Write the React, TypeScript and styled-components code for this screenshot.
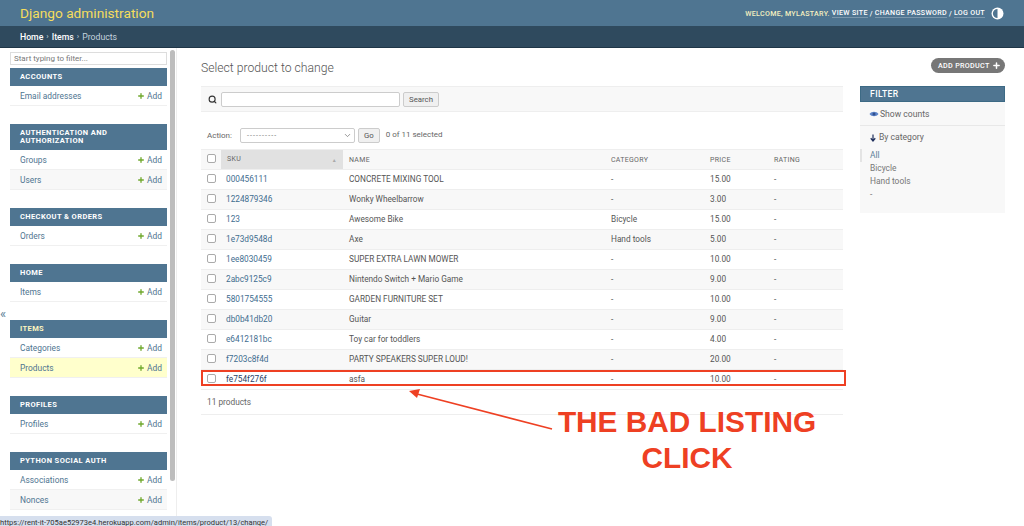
import React from "react"
import styled, { createGlobalStyle } from "styled-components"
import { Plus, Search as SearchIcon, ChevronDown } from "lucide-react"

const GlobalStyle = createGlobalStyle`
  html, body {
    margin: 0;
    padding: 0;
    width: 1024px;
    height: 526px;
    overflow: hidden;
    background: #fff;
    font-family: Roboto, "Liberation Sans", sans-serif;
    color: #444;
  }
  * { box-sizing: border-box; }
`

const Page = styled.div`
  position: relative;
  width: 1024px;
  height: 526px;
  overflow: hidden;
  display: flex;
  flex-direction: column;
`

const Header = styled.header`
  height: 26px;
  flex: none;
  background: #4f7591;
  display: flex;
  align-items: center;
  justify-content: space-between;
  padding: 0 20px 0 20px;
`

const Brand = styled.div`
  font-size: 13.7px;
  color: #f5dd5d;
  font-weight: 400;
`

const UserTools = styled.div`
  display: flex;
  align-items: center;
  font-size: 7.1px;
  letter-spacing: 0.3px;
  color: #f5f0c0;
  text-transform: uppercase;
  font-weight: 500;
`

const ToolLink = styled.span`
  color: #fff;
  border-bottom: 1px solid rgba(255, 255, 255, 0.25);
`

const Slash = styled.span`
  color: #fff;
  margin: 0 2px;
`

const ThemeIcon = styled.svg`
  width: 13px;
  height: 13px;
  margin-left: 6px;
`

const Crumbs = styled.nav`
  height: 22px;
  flex: none;
  background: #2f4a5e;
  border-bottom: 1px solid #1f3647;
  padding-left: 20px;
  display: flex;
  align-items: center;
  font-size: 8.7px;
  color: #c5d4de;
`

const CrumbLink = styled.span`
  color: #fff;
  font-weight: 500;
`

const CrumbSep = styled.span`
  margin: 0 3px;
  font-size: 8px;
`

const Main = styled.div`
  flex: 1;
  display: flex;
  min-height: 0;
`

const SideArea = styled.aside`
  width: 177px;
  flex: none;
  display: flex;
  border-right: 1px solid #eee;
  overflow: hidden;
`

const ToggleColumn = styled.div`
  width: 10px;
  flex: none;
  color: #5b7f98;
  font-size: 13px;
  padding-top: 258px;
`

const SideNav = styled.div`
  width: 157px;
  flex: none;
  padding-top: 4px;
`

const FilterInput = styled.div`
  height: 13px;
  border: 1px solid #ddd;
  background: #fff;
  font-size: 8px;
  line-height: 11px;
  color: #777;
  padding-left: 3px;
  margin-bottom: 3px;
`

const Module = styled.section`
  margin-bottom: 18px;
`

const Caption = styled.div<{ $current?: boolean }>`
  background: #4f7591;
  font-size: 7.5px;
  font-weight: 700;
  letter-spacing: 0.4px;
  line-height: 8px;
  padding: 5px 10px;
  text-transform: uppercase;
  color: ${(p) => (p.$current ? "#fdf6c0" : "#fff")};
`

const NavRow = styled.div<{ $tone?: "gray" | "current" }>`
  height: 20px;
  display: flex;
  align-items: center;
  justify-content: space-between;
  padding: 0 5px 0 10px;
  font-size: 8.4px;
  color: #4f7591;
  border-bottom: 1px solid #f0f0f0;
  background: ${(p) =>
    p.$tone === "current" ? "#ffffcc" : p.$tone === "gray" ? "#f8f8f8" : "#fff"};
`

const AddLink = styled.span`
  display: flex;
  align-items: center;
  gap: 2px;
`

const ScrollThumb = styled.div`
  width: 5px;
  height: 431px;
  margin: 2px 0 0 3px;
  border-radius: 3px;
  background: #bdbdbd;
  flex: none;
`

const Content = styled.main`
  flex: 1;
  display: flex;
  padding: 10px 19px 0 24px;
  gap: 17px;
`

const ListColumn = styled.div`
  width: 642px;
  flex: none;
`

const Title = styled.h1`
  margin: 2px 0 10px;
  font-size: 12.2px;
  font-weight: 300;
  line-height: 16px;
  color: #555;
`

const Toolbar = styled.div`
  height: 26px;
  background: #f8f8f8;
  border-top: 1px solid #eee;
  border-bottom: 1px solid #eee;
  padding-left: 7px;
  display: flex;
  align-items: center;
  margin-bottom: 12px;
`

const SearchBox = styled.div`
  width: 179px;
  height: 15px;
  margin-left: 4px;
  background: #fff;
  border: 1px solid #ccc;
  border-radius: 2px;
`

const GrayButton = styled.div`
  height: 15px;
  margin-left: 3px;
  padding: 0 5px;
  display: flex;
  align-items: center;
  font-size: 7.8px;
  color: #555;
  background: #f0f0f0;
  border: 1px solid #ccc;
  border-radius: 2px;
`

const Actions = styled.div`
  height: 23px;
  margin-bottom: 2px;
  display: flex;
  align-items: center;
  padding-left: 6px;
  font-size: 8px;
  color: #666;
`

const ActionSelect = styled.div`
  width: 115px;
  height: 15px;
  margin-left: 8px;
  padding: 0 2px 0 6px;
  display: flex;
  align-items: center;
  justify-content: space-between;
  background: #fff;
  border: 1px solid #ccc;
  border-radius: 2px;
  color: #777;
`

const Dashes = styled.span`
  font-size: 7px;
  letter-spacing: 1.1px;
`

const Counter = styled.span`
  margin-left: 6px;
  position: relative;
  top: -1px;
`

const Table = styled.table`
  width: 642px;
  border-collapse: collapse;
  table-layout: fixed;
  font-size: 8.25px;
`

const Th = styled.th<{ $sorted?: boolean }>`
  height: 20px;
  padding: 0 6px;
  text-align: left;
  font-size: 7px;
  font-weight: 400;
  letter-spacing: 0.3px;
  color: #666;
  text-transform: uppercase;
  background: ${(p) => (p.$sorted ? "#e1e1e1" : "#f8f8f8")};
  border-top: 1px solid #eee;
  border-bottom: 1px solid #eee;
`

const SortMark = styled.span`
  float: right;
  color: #aaa;
  font-size: 5px;
  line-height: 10px;
`

const Tr = styled.tr<{ $striped: boolean }>`
  background: ${(p) => (p.$striped ? "#f8f8f8" : "#fff")};
`

const Td = styled.td`
  height: 20px;
  padding: 0 6px 1px;
  border-bottom: 1px solid #eee;
  color: #555;
  white-space: nowrap;
`

const CheckCell = styled(Td)`
  padding: 0 0 2px 6px;
`

const CheckHead = styled(Th)`
  padding: 0 0 2px 6px;
`

const SkuCell = styled(Td)<{ $dark?: boolean }>`
  padding-left: 5px;
  color: ${(p) => (p.$dark ? "#2a3f66" : "#3f6d8f")};
`

const Check = styled.span`
  display: block;
  width: 9px;
  height: 9px;
  background: #fff;
  border: 1px solid #aaa;
  border-radius: 2px;
`

const Paginator = styled.div`
  height: 25px;
  padding-left: 6px;
  display: flex;
  align-items: center;
  font-size: 8.3px;
  color: #666;
  border-bottom: 1px solid #eee;
`

const FilterPanel = styled.div`
  width: 145px;
  flex: none;
  margin-top: 28px;
  align-self: flex-start;
  background: #f8f8f8;
  height: 127px;
`

const AddButton = styled.div`
  position: absolute;
  top: 58px;
  left: 931px;
  width: 74px;
  height: 15px;
  padding: 0 4px 0 7px;
  border-radius: 8px;
  background: #777;
  color: #fff;
  font-size: 7.2px;
  font-weight: 500;
  letter-spacing: 0.3px;
  display: flex;
  align-items: center;
  justify-content: space-between;
`

const FilterTitle = styled.div`
  height: 16px;
  background: #4f7591;
  border: 1px solid #3d6a85;
  color: #fff;
  font-size: 8.6px;
  font-weight: 500;
  letter-spacing: 0.4px;
  padding-left: 9px;
  line-height: 14px;
`

const ShowCounts = styled.div`
  height: 24px;
  padding-left: 9px;
  display: flex;
  align-items: center;
  gap: 1px;
  font-size: 8.6px;
  color: #666;
  border-bottom: 1px solid #e8e8e8;
`

const FilterHeading = styled.div`
  padding: 6px 0 5.5px 10px;
  display: flex;
  align-items: center;
  gap: 3px;
  font-size: 8.6px;
  line-height: 11px;
  color: #666;
`

const FilterItem = styled.div<{ $selected?: boolean }>`
  height: 13.3px;
  line-height: 13.3px;
  padding-left: 8px;
  font-size: 8.4px;
  color: ${(p) => (p.$selected ? "#5b7f98" : "#777")};
  border-left: 2px solid ${(p) => (p.$selected ? "#e4e4e4" : "transparent")};
`

const Highlight = styled.div`
  position: absolute;
  left: 201px;
  top: 370px;
  width: 645px;
  height: 16px;
  border: 2px solid #ee4023;
`

const ArrowArt = styled.svg`
  position: absolute;
  left: 405px;
  top: 385px;
  width: 155px;
  height: 50px;
`

const Callout = styled.div`
  position: absolute;
  left: 540px;
  top: 404px;
  width: 294px;
  text-align: center;
  color: #ee4023;
  font-family: "Liberation Sans", sans-serif;
  font-weight: 700;
  font-size: 29.8px;
  line-height: 36px;
`

const StatusBar = styled.div`
  position: absolute;
  left: 0;
  bottom: 0;
  width: 272px;
  height: 10px;
  background: #d6dfee;
  border-top-right-radius: 3px;
  font-size: 7.55px;
  line-height: 13px;
  color: #333;
  overflow: hidden;
  white-space: nowrap;
`

type Entry = { label: string; tone?: "gray" | "current" }
const modules: { name: string; rows: Entry[]; current?: boolean }[] = [
  { name: "Accounts", rows: [{ label: "Email addresses" }] },
  {
    name: "Authentication and Authorization",
    rows: [{ label: "Groups" }, { label: "Users", tone: "gray" }],
  },
  { name: "Checkout & Orders", rows: [{ label: "Orders" }] },
  { name: "Home", rows: [{ label: "Items" }] },
  {
    name: "Items",
    current: true,
    rows: [{ label: "Categories" }, { label: "Products", tone: "current" }],
  },
  { name: "Profiles", rows: [{ label: "Profiles" }] },
  {
    name: "Python Social Auth",
    rows: [{ label: "Associations" }, { label: "Nonces", tone: "gray" }],
  },
]

const products = [
  ["000456111", "CONCRETE MIXING TOOL", "-", "15.00"],
  ["1224879346", "Wonky Wheelbarrow", "-", "3.00"],
  ["123", "Awesome Bike", "Bicycle", "15.00"],
  ["1e73d9548d", "Axe", "Hand tools", "5.00"],
  ["1ee8030459", "SUPER EXTRA LAWN MOWER", "-", "10.00"],
  ["2abc9125c9", "Nintendo Switch + Mario Game", "-", "9.00"],
  ["5801754555", "GARDEN FURNITURE SET", "-", "10.00"],
  ["db0b41db20", "Guitar", "-", "9.00"],
  ["e6412181bc", "Toy car for toddlers", "-", "4.00"],
  ["f7203c8f4d", "PARTY SPEAKERS SUPER LOUD!", "-", "20.00"],
  ["fe754f276f", "asfa", "-", "10.00"],
]

const App = function () {
  return (
    <Page>
      <GlobalStyle />
      <Header>
        <Brand>Django administration</Brand>
        <UserTools>
          Welcome, mylastary.&nbsp;
          <ToolLink>View site</ToolLink>
          <Slash>/</Slash>
          <ToolLink>Change password</ToolLink>
          <Slash>/</Slash>
          <ToolLink>Log out</ToolLink>
          <ThemeIcon viewBox="0 0 24 24">
            <circle cx="12" cy="12" r="11" fill="#fff" />
            <path d="M12 3.500a8.500 8.500 0 0 0 0 17z" fill="#4f7591" />
          </ThemeIcon>
        </UserTools>
      </Header>
      <Crumbs>
        <CrumbLink>Home</CrumbLink>
        <CrumbSep>›</CrumbSep>
        <CrumbLink>Items</CrumbLink>
        <CrumbSep>›</CrumbSep>
        Products
      </Crumbs>
      <Main>
        <SideArea>
          <ToggleColumn>«</ToggleColumn>
          <SideNav>
            <FilterInput>Start typing to filter...</FilterInput>
            {modules.map((m) => (
              <Module key={m.name}>
                <Caption $current={m.current}>{m.name}</Caption>
                {m.rows.map((r) => (
                  <NavRow key={r.label} $tone={r.tone}>
                    {r.label}
                    <AddLink>
                      <Plus size={8} color="#70a82d" strokeWidth={4} />
                      Add
                    </AddLink>
                  </NavRow>
                ))}
              </Module>
            ))}
          </SideNav>
          <ScrollThumb />
        </SideArea>
        <Content>
          <ListColumn>
            <Title>Select product to change</Title>
            <Toolbar>
              <SearchIcon size={9} color="#333" strokeWidth={3} />
              <SearchBox />
              <GrayButton>Search</GrayButton>
            </Toolbar>
            <Actions>
              Action:
              <ActionSelect>
                <Dashes>----------</Dashes>
                <ChevronDown size={9} color="#777" />
              </ActionSelect>
              <GrayButton>Go</GrayButton>
              <Counter>0 of 11 selected</Counter>
            </Actions>
            <Table>
              <colgroup>
                <col style={{ width: 20 }} />
                <col style={{ width: 122 }} />
                <col style={{ width: 262 }} />
                <col style={{ width: 99 }} />
                <col style={{ width: 64 }} />
                <col style={{ width: 75 }} />
              </colgroup>
              <thead>
                <tr>
                  <CheckHead>
                    <Check />
                  </CheckHead>
                  <Th $sorted>
                    SKU<SortMark>▲</SortMark>
                  </Th>
                  <Th>Name</Th>
                  <Th>Category</Th>
                  <Th>Price</Th>
                  <Th>Rating</Th>
                </tr>
              </thead>
              <tbody>
                {products.map(([sku, name, category, price], i) => (
                  <Tr key={sku} $striped={i % 2 === 1}>
                    <CheckCell>
                      <Check />
                    </CheckCell>
                    <SkuCell $dark={i === 10}>{sku}</SkuCell>
                    <Td>{name}</Td>
                    <Td>{category}</Td>
                    <Td>{price}</Td>
                    <Td>-</Td>
                  </Tr>
                ))}
              </tbody>
            </Table>
            <Paginator>11 products</Paginator>
          </ListColumn>
          <FilterPanel>
            <FilterTitle>FILTER</FilterTitle>
            <ShowCounts>
              <svg width="10" height="8" viewBox="0 0 20 16">
                <path d="M1 8c4-6 14-6 18 0-4 6-14 6-18 0z" fill="#5f86c9" />
                <circle cx="10" cy="8" r="3" fill="#2f4f8f" />
              </svg>
              Show counts
            </ShowCounts>
            <FilterHeading>
              <svg width="6" height="8" viewBox="0 0 12 16">
                <path d="M6 1v12M1.500 8.500 6 14l4.500-5.500" stroke="#1f2f5c" strokeWidth="2.400" fill="none" />
              </svg>
              By category
            </FilterHeading>
            <FilterItem $selected>All</FilterItem>
            <FilterItem>Bicycle</FilterItem>
            <FilterItem>Hand tools</FilterItem>
            <FilterItem>-</FilterItem>
          </FilterPanel>
        </Content>
      </Main>
      <AddButton>
        ADD PRODUCT
        <Plus size={9} color="#fff" strokeWidth={4} />
      </AddButton>
      <Highlight />
      <ArrowArt viewBox="0 0 155 50">
        <path d="M147 44 L12 9" stroke="#ee4023" strokeWidth="1.6" fill="none" />
        <path d="M4 6 L15 4 L12 13 Z" fill="#ee4023" />
      </ArrowArt>
      <Callout>
        THE BAD LISTING
        <br />
        CLICK
      </Callout>
      <StatusBar>https://rent-it-705ae52973e4.herokuapp.com/admin/items/product/13/change/</StatusBar>
    </Page>
  )
}

export default App
